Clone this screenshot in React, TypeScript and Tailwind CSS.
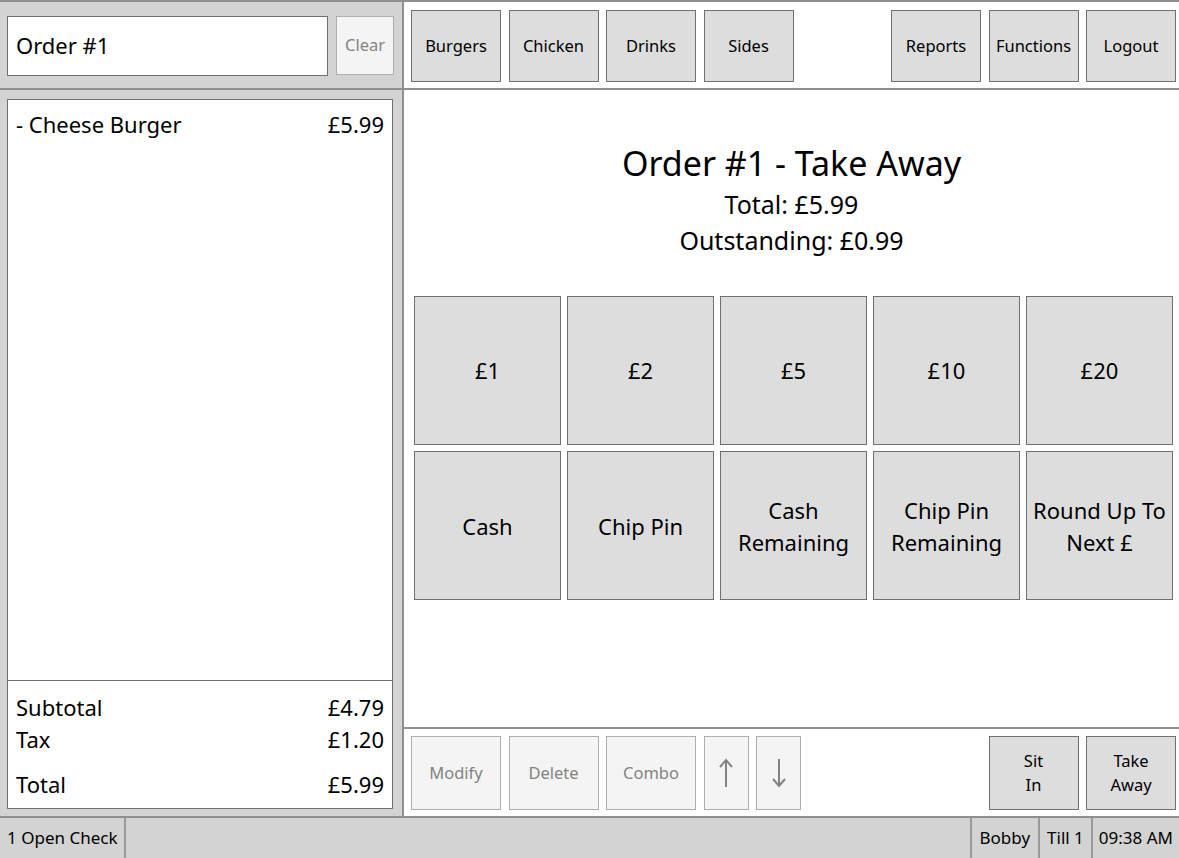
import React from "react";

const CATEGORIES = ["Burgers", "Chicken", "Drinks", "Sides"];
const TOOLS = ["Reports", "Functions", "Logout"];
const AMOUNTS = ["£1", "£2", "£5", "£10", "£20"];
const PAYMENTS = [
  ["Cash"],
  ["Chip Pin"],
  ["Cash", "Remaining"],
  ["Chip Pin", "Remaining"],
  ["Round Up To", "Next £"],
];

function PosButton({
  children,
  className = "",
  disabled = false,
}: {
  children: React.ReactNode;
  className?: string;
  disabled?: boolean;
}) {
  return (
    <button
      className={
        "flex flex-col items-center justify-center border " +
        (disabled
          ? "bg-[#f4f4f4] border-[#adadad] text-[#838383] "
          : "bg-[#dddddd] border-[#707070] text-black ") +
        className
      }
    >
      {children}
    </button>
  );
}

function Arrow({ down = false }: { down?: boolean }) {
  return (
    <svg
      width="16"
      height="30"
      viewBox="0 0 16 30"
      fill="none"
      stroke="#838383"
      strokeWidth="2"
      className={down ? "rotate-180" : ""}
    >
      <path d="M8 2 L8 29" />
      <path d="M2 9 L8 2 L14 9" />
    </svg>
  );
}

export default function App() {
  return (
    <div
      className="w-[1179px] h-[858px] flex flex-col bg-[#d3d3d3] overflow-hidden"
      style={{ fontFamily: '"Noto Sans", "Open Sans", sans-serif' }}
    >
      <div className="flex flex-1 min-h-0 border-t-2 border-[#8f8f8f] border-b-2">
        {/* Left column */}
        <div className="w-[404px] flex flex-col bg-[#d3d3d3] border-r-2 border-[#8f8f8f]">
          <div className="h-[88px] flex items-center gap-[8px] pl-[7px] pt-[1px] border-b-2 border-[#8f8f8f]">
            <div className="w-[321px] h-[60px] bg-white border border-[#707070] flex items-center px-[8px] text-[22px] text-black">
              Order #1
            </div>
            <button className="w-[58px] h-[59px] bg-[#f4f4f4] border border-[#adadad] text-[#838383] text-[16.5px]">
              Clear
            </button>
          </div>
          <div className="flex-1 pl-[7px] pr-[9px] pt-[9px] pb-[7px] flex">
            <div className="flex-1 bg-white border border-[#707070] flex flex-col">
              <div className="flex-1 px-[8px] pt-[8px]">
                <div className="flex justify-between text-[22px] text-black">
                  <span>- Cheese Burger</span>
                  <span>£5.99</span>
                </div>
              </div>
              <div className="h-[128px] border-t border-[#707070] px-[8px] pt-[10px] text-[22px] text-black leading-[32px]">
                <div className="flex justify-between">
                  <span>Subtotal</span>
                  <span>£4.79</span>
                </div>
                <div className="flex justify-between">
                  <span>Tax</span>
                  <span>£1.20</span>
                </div>
                <div className="flex justify-between mt-[13px]">
                  <span>Total</span>
                  <span>£5.99</span>
                </div>
              </div>
            </div>
          </div>
        </div>

        {/* Right column */}
        <div className="flex-1 flex flex-col bg-white">
          <div className="h-[88px] flex items-start gap-[7.5px] pl-[7px] pr-[3px] pt-[8px] border-b-2 border-[#8f8f8f]">
            {CATEGORIES.map((c) => (
              <PosButton key={c} className="w-[90px] h-[72px] text-[16.5px]">
                {c}
              </PosButton>
            ))}
            <div className="flex-1" />
            {TOOLS.map((t) => (
              <PosButton key={t} className="w-[90px] h-[72px] text-[16.5px]">
                {t}
              </PosButton>
            ))}
          </div>

          <div className="flex-1 flex flex-col">
            <div className="flex flex-col items-center pt-[50px] text-black">
              <div className="text-[34px] leading-[46px]">Order #1 - Take Away</div>
              <div className="text-[25px] leading-[36px]">Total: £5.99</div>
              <div className="text-[25px] leading-[36px]">Outstanding: £0.99</div>
            </div>
            <div className="ml-[10px] mt-[38px] w-[759px] grid grid-cols-5 gap-x-[6px] gap-y-[6px]">
              {AMOUNTS.map((a) => (
                <PosButton key={a} className="h-[149px] text-[22px]">
                  {a}
                </PosButton>
              ))}
              {PAYMENTS.map((p) => (
                <PosButton key={p.join(" ")} className="h-[149px] text-[22px] leading-[32px]">
                  {p.map((l) => (
                    <span key={l}>{l}</span>
                  ))}
                </PosButton>
              ))}
            </div>
          </div>

          <div className="h-[89px] flex items-start gap-[7.5px] pl-[7px] pr-[3px] pt-[7px] border-t-2 border-[#8f8f8f]">
            <PosButton disabled className="w-[90px] h-[74px] text-[16.5px]">
              Modify
            </PosButton>
            <PosButton disabled className="w-[90px] h-[74px] text-[16.5px]">
              Delete
            </PosButton>
            <PosButton disabled className="w-[90px] h-[74px] text-[16.5px]">
              Combo
            </PosButton>
            <PosButton disabled className="w-[45px] h-[74px]">
              <Arrow />
            </PosButton>
            <PosButton disabled className="w-[45px] h-[74px]">
              <Arrow down />
            </PosButton>
            <div className="flex-1" />
            <PosButton className="w-[90px] h-[74px] text-[16.5px] leading-[24px]">
              <span>Sit</span>
              <span>In</span>
            </PosButton>
            <PosButton className="w-[90px] h-[74px] text-[16.5px] leading-[24px]">
              <span>Take</span>
              <span>Away</span>
            </PosButton>
          </div>
        </div>
      </div>

      {/* Status bar */}
      <div className="h-[40px] flex items-stretch text-[17px] text-black bg-[#d3d3d3]">
        <div className="flex items-center px-[7px] border-r-2 border-[#9a9a9a]">1 Open Check</div>
        <div className="flex-1" />
        <div className="flex items-center px-[8px] border-l-2 border-[#9a9a9a]">Bobby</div>
        <div className="flex items-center px-[7px] border-l-2 border-[#9a9a9a]">Till 1</div>
        <div className="flex items-center px-[6px] border-l-2 border-[#9a9a9a]">09:38 AM</div>
      </div>
    </div>
  );
}
